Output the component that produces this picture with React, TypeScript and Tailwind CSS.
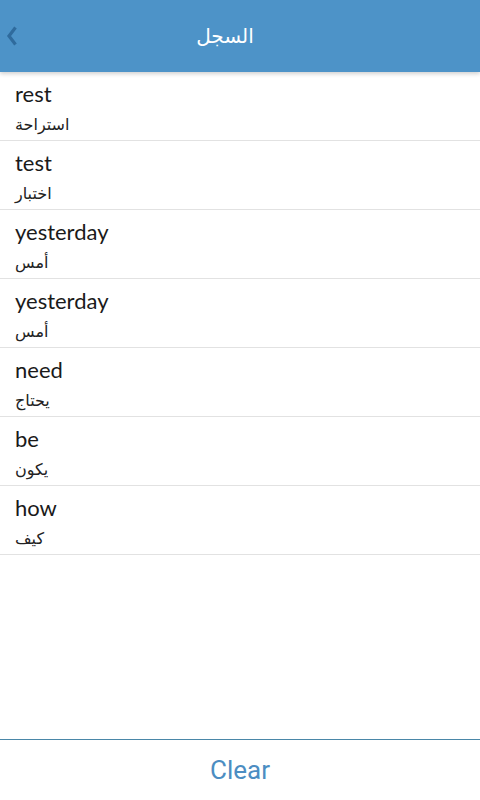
const items = [
  { en: 'rest', ar: 'استراحة' },
  { en: 'test', ar: 'اختبار' },
  { en: 'yesterday', ar: 'أمس' },
  { en: 'yesterday', ar: 'أمس' },
  { en: 'need', ar: 'يحتاج' },
  { en: 'be', ar: 'يكون' },
  { en: 'how', ar: 'كيف' },
];

export default function App() {
  return (
    <div className="flex h-[800px] w-[480px] flex-col bg-white">
      <header className="relative z-10 flex h-[72px] shrink-0 items-center bg-[#4d93c8] shadow-[0_2px_4px_rgba(0,0,0,0.18)]">
        <svg width="12" height="20" viewBox="0 0 12 20" className="ml-[6px]" fill="none">
          <path d="M9.5 1.5 L3 10 L9.5 18.5" stroke="#2f6b9d" strokeWidth="3.2" strokeLinejoin="miter" />
        </svg>
        <h1 className="flex-1 pr-[48px] text-center text-[20px] text-white font-['DejaVu_Sans',sans-serif]">
          السجل
        </h1>
      </header>
      <ul className="flex-1">
        {items.map((it, i) => (
          <li key={i} className="flex h-[69px] flex-col border-b border-[#e2e2e2] pl-[15px] pt-[8px]">
            <span className="text-[22px] leading-[28px] text-[#1a1a1a] font-['Lato',sans-serif]">{it.en}</span>
            <span className="pt-[4px] text-[16px] leading-[26px] text-[#222] font-['DejaVu_Sans',sans-serif]">{it.ar}</span>
          </li>
        ))}
      </ul>
      <button className="flex h-[61px] shrink-0 items-center justify-center border-t border-solid border-[#4a87a8] text-[26px] text-[#4c8dc2] font-['Roboto',sans-serif]">
        Clear
      </button>
    </div>
  );
}
